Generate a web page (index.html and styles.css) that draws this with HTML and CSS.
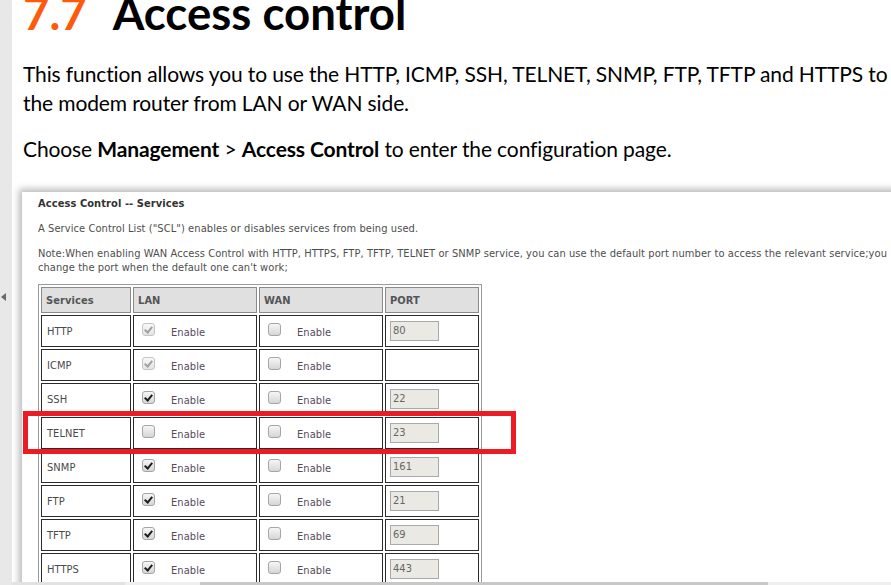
FILE: index.html
```html
<!DOCTYPE html>
<html lang="en">
<head>
<meta charset="utf-8">
<title>7.7 Access control</title>
<link rel="stylesheet" href="styles.css">
</head>
<body>
<div class="viewer">
  <aside class="gutter"><span class="arrow"></span></aside>
  <main class="page">
    <h1 class="title"><span class="num">7.7</span><span class="name">Access control</span></h1>
    <p class="para">This function allows you to use the HTTP, ICMP, SSH, TELNET, SNMP, FTP, TFTP and HTTPS to manage<br>the modem router from LAN or WAN side.</p>
    <p class="para">Choose <b>Management</b> &gt; <b>Access Control</b> to enter the configuration page.</p>
    <div class="shot">
      <div class="shot-title">Access Control -- Services</div>
      <p class="shot-text">A Service Control List ("SCL") enables or disables services from being used.</p>
      <p class="shot-text">Note:When enabling WAN Access Control with HTTP, HTTPS, FTP, TFTP, TELNET or SNMP service, you can use the default port number to access the relevant service;you<br>change the port when the default one can't work;</p>
      <table class="scl">
        <thead>
          <tr><th class="c-svc">Services</th><th class="c-lan">LAN</th><th class="c-wan">WAN</th><th class="c-port">PORT</th></tr>
        </thead>
        <tbody>
          <tr><td>HTTP</td><td><span class="chk"><span class="cb on dis"></span>Enable</span></td><td><span class="chk"><span class="cb"></span>Enable</span></td><td><span class="port">80</span></td></tr>
          <tr><td>ICMP</td><td><span class="chk"><span class="cb on dis"></span>Enable</span></td><td><span class="chk"><span class="cb"></span>Enable</span></td><td></td></tr>
          <tr><td>SSH</td><td><span class="chk"><span class="cb on"></span>Enable</span></td><td><span class="chk"><span class="cb"></span>Enable</span></td><td><span class="port">22</span></td></tr>
          <tr><td class="marked">TELNET<span class="highlight"></span></td><td><span class="chk"><span class="cb"></span>Enable</span></td><td><span class="chk"><span class="cb"></span>Enable</span></td><td><span class="port">23</span></td></tr>
          <tr><td>SNMP</td><td><span class="chk"><span class="cb on"></span>Enable</span></td><td><span class="chk"><span class="cb"></span>Enable</span></td><td><span class="port">161</span></td></tr>
          <tr><td>FTP</td><td><span class="chk"><span class="cb on"></span>Enable</span></td><td><span class="chk"><span class="cb"></span>Enable</span></td><td><span class="port">21</span></td></tr>
          <tr><td>TFTP</td><td><span class="chk"><span class="cb on"></span>Enable</span></td><td><span class="chk"><span class="cb"></span>Enable</span></td><td><span class="port">69</span></td></tr>
          <tr><td>HTTPS</td><td><span class="chk"><span class="cb on"></span>Enable</span></td><td><span class="chk"><span class="cb"></span>Enable</span></td><td><span class="port">443</span></td></tr>
        </tbody>
      </table>
    </div>
  </main>
</div>
<div class="hscroll">
  <span class="hs-a"></span><span class="hs-b"></span><span class="hs-thumb"></span><span class="hs-c"></span>
</div>
</body>
</html>
```
FILE: styles.css
```css
html, body {
  margin: 0;
  height: 100%;
  overflow: hidden;
}
body {
  background: #fff;
  font-family: Lato, "Open Sans", sans-serif;
  color: #000;
  position: relative;
}
.viewer {
  display: flex;
  height: 585px;
}
.gutter {
  flex: none;
  width: 12px;
  background: #e8e8e8;
  display: flex;
  flex-direction: column;
  padding-top: 293px;
  box-sizing: border-box;
}
.arrow {
  width: 0;
  height: 0;
  margin-left: 1px;
  border-top: 4px solid transparent;
  border-bottom: 4px solid transparent;
  border-right: 5px solid #6a6a6a;
}
.page {
  flex: 1;
  min-width: 0;
  overflow: hidden;
  background: #fff;
  padding-left: 11px;
}
.title {
  margin: -17px 0 0;
  font-size: 45.6px;
  line-height: 60px;
  font-weight: 700;
  white-space: nowrap;
  color: #000;
}
.num {
  color: #ff5a0a;
  margin-right: 26px;
}
.para {
  margin: 16px 0 0;
  font-size: 21px;
  line-height: 29px;
  white-space: nowrap;
  letter-spacing: -0.12px;
}
.para + .para {
  margin-top: 17px;
}
.para b {
  font-weight: 700;
}
.shot {
  margin: 29px 0 0 -1px;
  width: 900px;
  height: 420px;
  padding: 5px 0 0 16px;
  background: #fff;
  box-shadow: -3px -3px 7px rgba(0, 0, 0, 0.28);
  font-family: "DejaVu Sans", Verdana, sans-serif;
  font-stretch: condensed;
  font-size: 11px;
  letter-spacing: 0.08px;
  color: #4e4e4e;
}
.shot-title {
  font-weight: 700;
  color: #333;
  line-height: 14px;
}
.shot-text {
  margin: 11px 0 0;
  line-height: 14px;
  white-space: nowrap;
}
.scl {
  margin-top: 9px;
  border-collapse: separate;
  border-spacing: 2px;
  border: 1px solid #9a9a9a;
}
.scl th {
  height: 24px;
  padding: 0 0 0 4px;
  text-align: left;
  background: #e0e0e0;
  border: 1px solid #8a8a8a;
  color: #555;
  font-weight: 700;
}
.scl td {
  height: 30px;
  padding: 0 0 0 5px;
  border: 1px solid #2b2b2b;
  color: #4a4a4a;
  vertical-align: middle;
}
.c-svc { width: 84px; }
.c-lan { width: 118px; }
.c-wan { width: 118px; }
.c-port { width: 88px; }
.scl td:nth-child(2),
.scl td:nth-child(3) {
  padding-left: 8px;
}
.scl td:nth-child(4) {
  padding-left: 3px;
}
.chk {
  display: flex;
  align-items: flex-end;
  gap: 16px;
  color: #574a60;
}
.cb {
  flex: none;
  position: relative;
  width: 11px;
  height: 11px;
  border: 1px solid #a5a5a5;
  border-radius: 3px;
  background: linear-gradient(#f6f6f6, #d6d6d6);
  margin-bottom: 3px;
}
.cb.on::after {
  content: "";
  position: absolute;
  left: 3px;
  top: 1px;
  width: 3px;
  height: 6px;
  border: solid #1e1e1e;
  border-width: 0 2px 2px 0;
  transform: rotate(40deg);
}
.cb.dis {
  border-color: #c4c4c4;
  background: linear-gradient(#f8f8f8, #e4e4e4);
}
.cb.dis::after {
  border-color: #a0a0a0;
}
.port {
  display: block;
  width: 45px;
  height: 18px;
  line-height: 18px;
  margin-left: 1px;
  border: 1px solid #a9a9a9;
  background: #ebe9e3;
  color: #666;
  padding-left: 2px;
}
.marked {
  position: relative;
}
.highlight {
  position: absolute;
  left: -19px;
  top: -7px;
  width: 493px;
  height: 43px;
  border: 5px solid #ed1c24;
  box-sizing: border-box;
}
.hscroll {
  position: absolute;
  left: 12px;
  right: 0;
  bottom: 0;
  height: 3px;
  display: flex;
}
.hs-a { width: 113px; background: #e2e2e2; }
.hs-b { width: 75px; background: #efefef; }
.hs-thumb { width: 568px; background: #c8c8c8; }
.hs-c { flex: 1; background: #efefef; }
```
